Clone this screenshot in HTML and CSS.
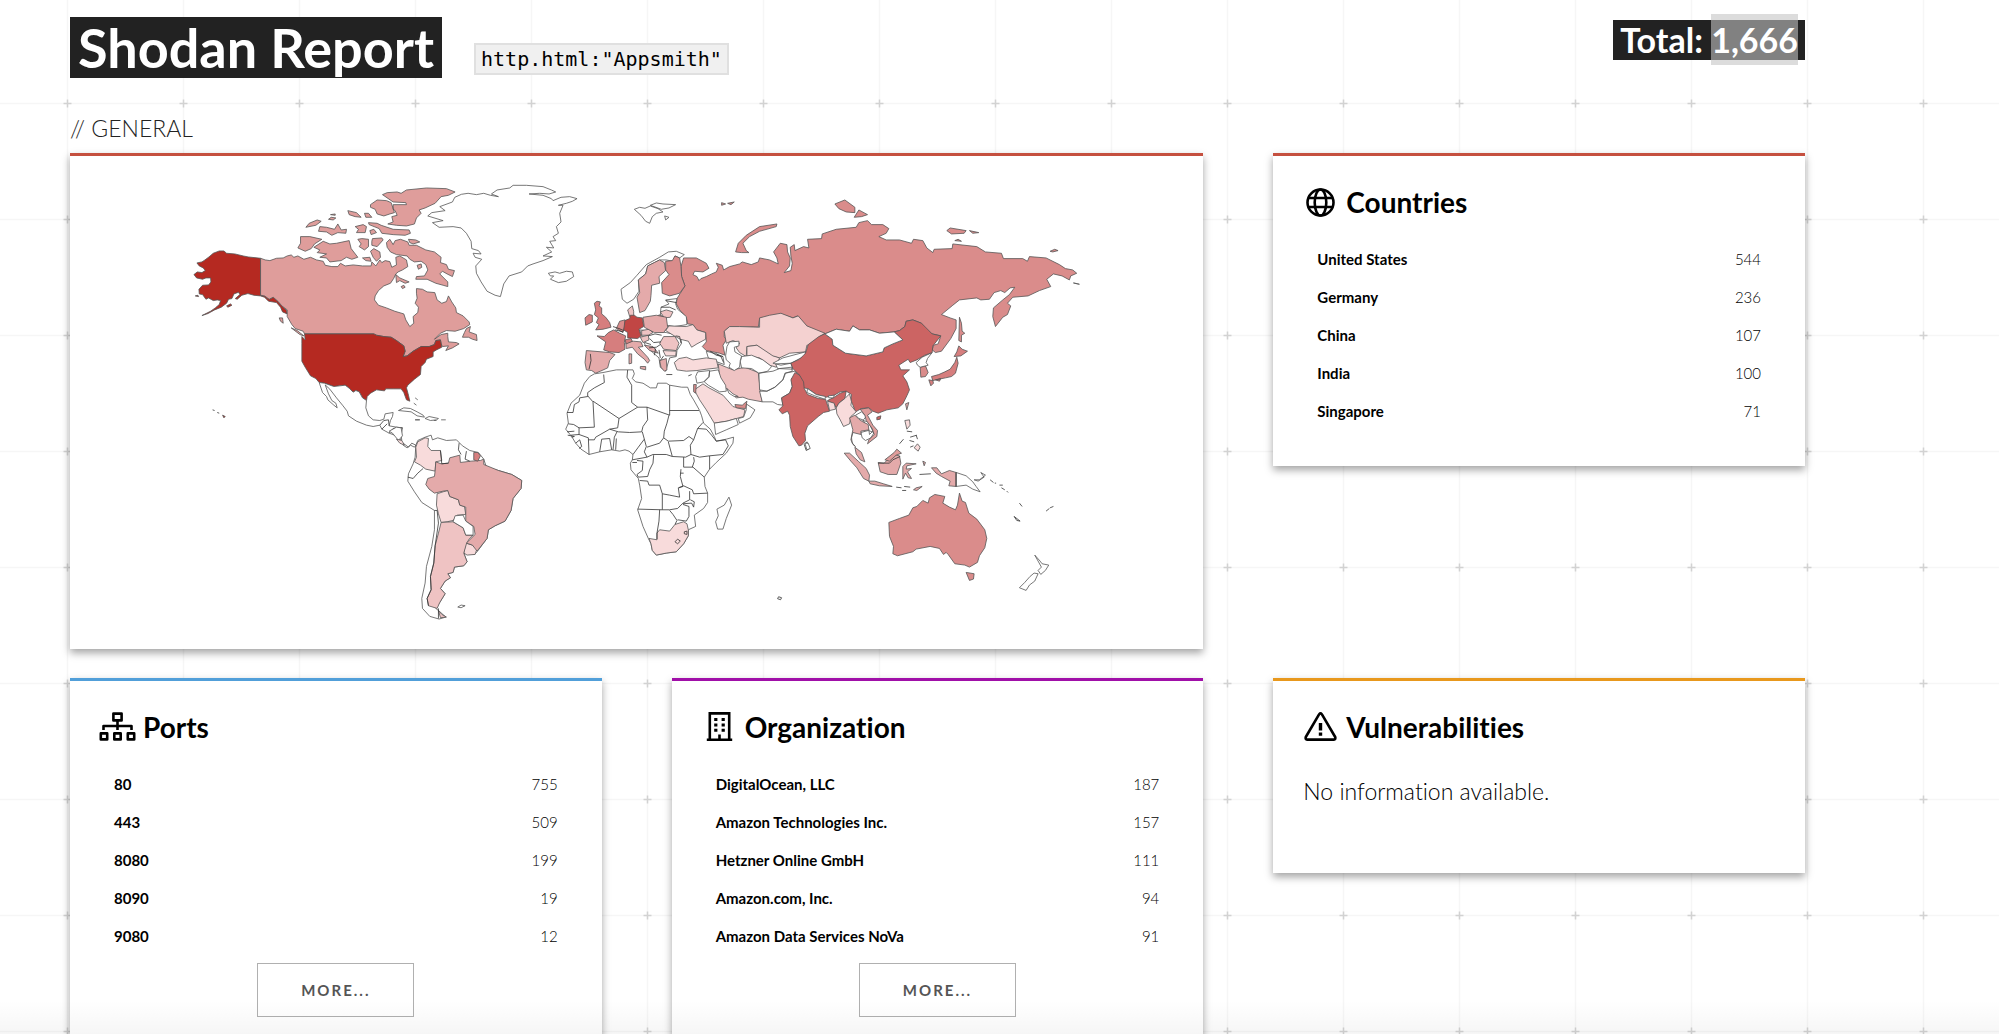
FILE: index.html
```html
<!DOCTYPE html>
<html lang="en">
<head>
<meta charset="utf-8">
<meta name="viewport" content="width=device-width, initial-scale=1">
<title>Shodan Report</title>
<link rel="stylesheet" href="styles.css">
</head>
<body>
<div class="page">
<header class="header">
  <h1 class="title">Shodan Report</h1>
  <code class="query">http.html:"Appsmith"</code>
  <p class="total">Total: <span class="total-value">1,666</span></p>
</header>
<main>
<h2 class="section-label">// GENERAL</h2>
<div class="cards">
<section class="card card-map">
<svg class="map" viewBox="70 156 1134 493" role="img" aria-label="World map of results by country">
<!-- North America -->
<g transform="translate(180 170) scale(.33333)">
<path class="l9" d="M242 265L205 261 190 258 165 252 140 250 132 243 118 243 100 250 87 261 75 270 66 276 51 279 58 288 70 294 76 302 66 308 52 306 42 314 50 324 68 328 78 324 92 324 93 336 86 345 68 346 57 358 58 372 68 374 78 388 86 384 100 392 112 390 122 392 118 404 106 414 92 424 66 437 84 431 104 420 124 412 140 400 146 388 156 386 162 372 176 367 180 374 166 386 172 388 186 376 204 371 222 376 242 378 254 382 266 394 290 398 302 412 308 426 322 432 320 422 306 408 294 394 280 382 268 388 254 378 242 376Z"/>
<path class="l5" d="M242 265L256 270 270 272 290 265 310 264 322 258 334 255 342 262 354 258 372 268 392 262 410 270 430 274 436 286 456 290 474 290 482 280 496 288 520 285 548 288 574 288 576 276 588 288 600 270 606 278 616 272 630 275 636 292 650 285 648 262 660 258 680 270 684 290 668 300 655 306 648 312 642 325 632 340 612 348 596 362 586 378 584 390 596 406 620 414 645 424 672 432 678 450 690 470 702 460 700 440 714 428 716 412 706 400 712 385 710 370 710 356 728 358 742 366 765 368 772 390 786 400 800 395 806 378 816 396 828 414 830 428 850 438 868 456 870 464 852 476 826 484 800 482 782 490 764 508 784 494 804 490 804 500 806 516 830 518 838 522 818 534 798 542 806 528 788 530 784 522 782 510 768 512 764 524 748 530 724 530 700 544 682 558 670 560 676 544 672 528 650 512 634 502 612 500 590 496 582 492 374 492 370 484 346 476 336 464 322 440 322 420 306 408 294 394 280 382 268 388 254 378 242 376Z"/>
<path class="l9" d="M374 492H582L590 496 612 500 634 502 650 512 672 528 676 544 670 560 682 558 700 544 724 530 748 530 764 524 768 512 782 510 786 532 770 540 760 546 760 560 740 568 736 578 724 590 722 614 704 628 684 646 680 654 686 676 690 694 680 690 672 668 664 657 640 657 618 657 614 663 590 660 572 670 562 680 560 692 548 684 538 666 528 662 520 667 508 655 496 646 480 648 462 650 434 640 418 638 408 626 392 618 376 592 366 574 366 520 366 500 376 510ZM140 408L152 402 156 406 144 412ZM46 378L54 376 56 380ZM128 736L136 740 132 744Z"/>
<path class="l5" d="M608 74L622 68 652 66 664 70 680 60 740 54 800 56 826 66 806 76 784 80 766 100 736 114 718 120 724 130 710 144 704 162 680 168 650 166 624 162 640 156 636 140 652 136 646 122 640 118 640 104 680 104 678 98 640 96ZM572 104L592 90 620 92 634 98 640 116 644 128 630 132 612 138 592 132 586 118 572 112ZM504 122L530 128 544 142 526 140 508 134ZM554 130L566 130 576 142 558 142ZM566 158L592 160 604 166 640 178 688 180 692 190 676 196 640 194 606 190 598 176 568 164ZM526 170L550 164 560 170 556 188 530 188 536 178ZM378 172L388 160 412 150 424 154 408 166ZM446 148L454 142 468 144 460 150ZM452 134L466 132 466 136ZM416 184L420 170 440 172 464 178 474 162 484 180 500 178 498 190 474 188 456 196 440 186ZM570 182L582 178 590 188 574 194ZM362 200L390 200 426 208 404 222 394 236 376 244 354 234 362 220ZM402 232L430 214 450 222 470 220 508 212 514 236 534 262 516 268 500 262 484 272 450 276 440 264 420 262 440 252 412 248 420 240ZM534 208L546 206 566 208 566 230 554 240 538 230 544 222ZM578 206L606 204 610 210 592 230 576 226 576 214ZM572 244L582 236 600 246 602 262 590 274 580 262ZM548 264L570 262 574 274 558 272ZM620 218L630 208 640 224 646 212 662 208 684 216 688 226 710 226 738 240 764 246 784 262 782 278 800 284 806 298 824 302 818 320 802 312 788 304 780 312 804 336 804 350 790 346 768 340 742 328 708 328 710 320 734 318 744 300 738 284 724 274 704 276 690 268 682 258 650 254 632 246 622 232ZM686 208L708 210 720 216 700 222 690 218ZM712 286L724 282 726 292 716 298ZM648 314L660 324 688 336 676 340 660 332 650 338ZM664 350L672 346 676 352 668 356ZM860 476L872 470 868 486 890 494 892 512 878 508 866 502 848 502 854 488ZM334 474L352 482 372 498 360 494ZM298 444L308 444 310 460 302 454Z"/>
<path class="l0" d="M418 638L428 668 440 680 444 690 462 706 472 714 468 700 456 692 446 672 436 645 450 658 470 684 488 706 502 724 506 738 530 754 560 766 580 770 600 766 606 778 628 790 650 798 666 812 664 796 668 774 650 772 628 768 632 752 638 740 640 728 616 732 612 748 600 752 580 750 566 738 558 714 560 692 548 684 538 666 528 662 520 667 508 655 496 646 480 648 462 650 434 640ZM656 722L672 714 692 716 712 726 730 736 734 742 712 738 694 726ZM736 746L748 740 776 746 770 750 752 752ZM706 750H720M784 750H798M706 684L714 690M702 700L710 706"/>
<path class="b" d="M600 766L612 752 626 750 628 768M606 778L622 762M628 790L640 776 668 774M98 720L104 722M112 728L118 730"/>
</g>
<!-- Greenland and North Atlantic -->
<g transform="translate(400 170) scale(.33333)">
<path class="l0" d="M165 82L185 73 205 70 230 74 252 70 272 76 296 80 275 72 292 60 330 54 340 46 380 46 430 50 455 60 468 66 448 72 420 70 388 72 430 76 455 86 460 92 484 82 510 80 532 86 518 94 500 100 476 106 490 106 480 130 484 156 470 170 476 190 460 200 468 212 450 214 462 234 440 232 456 246 430 258 458 260 430 272 400 282 384 288 366 306 328 318 312 342 302 380 286 376 262 364 244 336 230 310 228 288 246 268 226 262 220 250 244 252 236 242 216 236 214 214 200 190 184 174 160 170 118 172 98 158 130 152 84 138 96 128 136 122 120 110 158 96ZM446 310L452 318 462 318 452 328 476 338 500 334 522 320 518 306 500 304 480 310 466 306ZM704 118L720 112 736 115 752 108 775 116 790 126 770 130 758 140 750 160 738 154 724 136ZM752 106L770 99 790 102 828 104 808 114 785 118ZM795 138L808 142 798 150Z"/>
</g>
<!-- Russia -->
<g transform="translate(740 180) scale(.33333)">
<path class="l6" d="M-168 234L-130 234-100 250-92 265-110 276-135 274-140 284-128 290-122 302-116 296-100 290-84 282-70 276-64 262-70 250-52 256-48 270-30 260 0 252 8 246 35 254 56 246 60 234 90 240 116 252 112 234 102 216 122 190 142 194 144 216 152 234 150 258 134 278 154 272 158 250 154 228 152 202 164 194 166 212 192 200 208 204 204 178 246 176 248 162 290 148 350 142 358 128 384 122 396 134 430 134 448 146 440 160 418 170 440 180 480 180 516 190 522 178 550 182 562 204 580 218 584 208 638 206 640 192 712 200 738 216 786 220 792 236 850 236 864 244 870 230 920 234 960 254 978 266 1000 270 1012 280 994 288 990 300 968 288 942 282 922 298 934 320 900 332 866 348 820 352 804 370 814 378 804 404 790 412 768 440 760 410 762 384 790 360 810 344 826 322 812 324 796 338 784 332 764 338 750 358 724 360 712 354 660 360 640 376 606 404 632 414 650 420 650 446 634 476 606 514 588 518 578 510 582 496 596 492 604 468 578 462 560 450 546 430 520 420 500 424 496 440 480 452 464 456 420 460 390 450 360 450 340 438 330 454 290 448 256 462 240 460 200 438 174 408 160 414 124 402 60 416 56 442 0 440-30 440-46 454-46 470-40 480-50 496-44 526-60 520-100 512-112 500-100 486-102 458-130 450-140 434-156 432-160 412-180 390-190 372-188 356-178 340-164 318-174 290-176 260ZM-12 216L-4 190 20 166 60 140 112 132 110 140 60 154 30 170 10 190 20 212 28 218 6 218ZM286 72L316 60 346 82 346 98 320 96 298 86ZM344 112L358 90 384 104 366 110ZM622 152L632 144 680 152 674 160 636 162ZM690 152L718 158 700 160ZM646 182L656 178 666 184ZM932 214L946 208 956 212 940 216ZM1002 309L1020 313ZM660 412L666 430 668 454 676 460 666 466 666 486 658 482ZM-54 68L-42 72-54 76ZM-36 70L-16 66-26 74ZM-244 406L-226 402-220 412-240 414Z"/>
<path class="l7" d="M658 498L668 508 684 514 664 528 644 530 652 516ZM652 532L656 550 648 580 636 590 618 594 598 598 580 602 576 590 598 584 616 576 632 568 646 548ZM568 600L580 602 582 610 574 618ZM588 600L604 596 600 604Z"/>
<path class="l6" d="M542 562L558 558 566 578 558 590 544 592Z"/>
<path class="l0" d="M530 548L548 532 578 518 564 536 560 548 566 556 542 562 534 556Z"/>
</g>
<!-- South America -->
<g transform="translate(390 420) scale(.33333)">
<path class="l0" d="M78 76L84 62 106 52 124 46 128 60 144 54 170 62 200 60 218 78 240 92 266 98 282 118 290 142 326 152 366 164 396 182 394 206 370 236 364 272 346 304 316 318 296 330 292 356 262 396 254 404 222 400 232 426 222 438 194 442 190 458 174 462 182 474 166 484 152 506 166 522 150 548 138 566 148 574 168 592 148 598 120 590 98 566 96 536 106 490 110 440 126 380 134 330 134 272 96 248 74 216 54 184 56 162 70 132 76 112ZM-2 34L20 22 34 24 38 48 26 62 8 40ZM40 70L56 82 66 70 78 76 74 82 62 76 52 84 40 76ZM204 562L214 556 226 558 214 564ZM76 0H90M132 2H140"/>
<path class="l2" d="M78 82L84 66 106 54 116 56 114 80 124 92 152 92 156 122 138 126 136 154 108 148 92 136 74 126 80 112ZM20 58L36 62 44 76 30 70ZM142 222L160 216 174 212 180 230 206 240 210 256 224 260 228 284 202 286 190 302 172 306 154 308 146 282 140 256ZM228 370L248 376 262 386 256 404 232 406 222 400Z"/>
<path class="l3" d="M154 308L190 306 220 324 228 346 250 346 238 358 230 372 222 400 232 426 222 438 194 442 190 458 174 462 182 474 166 484 152 506 166 522 150 548 142 566 116 558 112 536 124 510 122 470 132 430 136 378 146 340ZM146 572L156 584 170 592 152 594Z"/>
<path class="l4" d="M136 154L138 126 154 132 176 130 180 114 210 106 212 128 244 124 272 122 282 118 282 134 326 152 366 164 396 182 394 206 370 236 364 272 346 304 316 318 296 330 292 356 262 394 248 376 230 370 256 344 252 320 228 304 228 262 210 256 206 240 180 230 174 212 160 214 134 220 118 208 108 194 114 176 134 170Z"/>
<path class="l0" d="M190 306L196 288 220 286 228 304 250 320 250 346 228 346 220 324Z"/>
<path class="l7" d="M252 98L264 98 272 108 264 124 252 120Z"/>
<path class="b" d="M152 92L156 132 176 130M208 70L206 90 214 104M230 94L226 118 240 124M54 172L70 176 84 160 100 146M134 272L142 272 146 310 136 378 132 430 122 470 124 510 112 536 116 558M146 566L146 596"/>
</g>
<!-- Europe, western and central Asia -->
<g transform="translate(560 230) scale(.33333)">
<path class="l0" d="M184 178L212 158 232 136 260 104 300 82 326 66 350 64 374 74 360 84 346 78 340 94 320 90 300 90 284 98 264 108 258 132 236 150 238 184 222 208 202 220 188 208ZM318 210L352 206 348 222 354 238 380 260 382 284 344 290 320 286 316 262 302 256 304 232 328 222ZM240 300L320 308 362 318 366 340 352 362 350 380 330 384 318 424 302 412 298 384 268 358 256 344ZM470 372L490 380 494 404 472 396 446 384 440 364Z"/>
<path class="l3" d="M204 240L218 228 222 244 222 258 210 260ZM302 246L320 240 340 246 332 262 314 264ZM246 302L268 298 280 308 266 316 246 316ZM242 322L266 316 268 330 250 338ZM312 320L346 320 358 340 350 362 312 358 300 340Z"/>
<path class="l4" d="M232 202L240 188 236 150 258 132 264 108 284 98 300 90 314 98 318 122 298 140 300 160 276 166 274 196 272 214 256 242 240 248ZM80 362L150 368 166 374 150 392 144 414 122 424 108 430 96 422 80 420 76 398ZM250 262L290 256 320 262 324 292 312 308 284 308 254 292ZM198 338L222 334 244 336 250 350 236 352 264 382 270 392 264 400 254 388 234 372 218 352 200 356ZM242 410L258 410 258 420 242 416ZM208 372L216 372 216 400 208 402ZM300 392L320 386 322 420 314 424 304 412ZM254 346L280 350 296 370 270 362Z"/>
<path class="l6" d="M306 158L328 134 318 120 318 94 338 92 346 78 360 84 364 110 366 140 376 168 360 190 330 198 308 190ZM170 296L180 274 196 270 196 286 190 308Z"/>
<path class="l7" d="M104 220L112 214 122 216 118 228 126 234 126 252 138 262 150 278 154 292 130 298 108 300 118 284 110 278 116 264 104 254 108 240ZM76 264L88 254 98 256 98 276 78 286ZM112 318L134 320 146 308 162 300 180 310 198 318 194 338 196 358 178 368 150 366 132 360 138 336ZM196 330L214 326 218 334 200 342Z"/>
<path class="l8" d="M196 272L210 266 212 256 224 256 232 262 248 264 252 290 238 298 244 318 234 326 204 324 204 308 192 300Z"/>
<path class="l2" d="M344 398L358 386 380 382 400 390 440 384 470 388 476 414 440 418 412 422 380 424 352 420ZM318 302L328 288 380 290 400 284 412 300 438 308 438 328 412 342 396 352 386 334 362 328 344 318ZM310 362L350 364 348 378 318 378ZM404 480L430 462 448 474 490 496 520 530 556 540 552 560 502 574 464 580 440 540 420 510Z"/>
<path class="l25" d="M494 304L510 290 540 290 600 292 600 264 630 256 664 250 700 264 716 258 742 288 796 310 780 320 778 342 742 346 738 366 690 370 660 384 640 380 610 360 592 346 562 350 560 380 540 368 530 354 540 340 520 332 500 340Z"/>
<path class="l2" d="M562 350L592 346 640 378 660 384 650 412 630 406 600 384 562 378Z"/>
<path class="l3" d="M476 402L500 412 520 420 556 412 596 428 600 462 602 486 608 516 566 508 550 502 530 504 510 486 494 470 480 440Z"/>
<path class="l0" d="M546 380L576 376 610 390 636 410 624 424 598 430 576 416 546 414 542 396ZM598 430L640 424 660 416 696 412 698 424 676 430 670 450 646 472 622 484 600 480ZM600 484L622 484 646 472 670 450 678 430 706 424 722 436 696 446 698 470 690 490 666 504 670 526 654 524 640 516 608 516ZM414 426L450 422 448 440 432 456 412 460 408 440ZM450 424L476 420 484 444 498 466 500 484 480 486 446 466 434 456 448 442ZM464 580L502 574 530 566 536 584 500 600 468 614ZM536 566L552 562 560 540 560 522 586 540 572 564 540 580ZM640 400L670 384 738 366 736 378 694 400 664 406ZM648 402L694 400 700 418 654 416ZM502 476L520 492 536 500 524 500 508 490Z"/>
<path class="l6" d="M526 524L548 526 562 514 558 536 530 534ZM402 464L410 464 408 490 402 486Z"/>
<path class="l0" d="M498 378L502 350 510 336 538 334 538 348 524 352 526 366 546 378 542 392 540 412 524 422 508 412 512 400 500 390Z"/>
<path class="b" d="M160 290L178 296 192 302M166 300L190 306M92 372L94 392 88 418M266 318L286 312 306 316M270 326L282 338 304 336M256 338L274 344M268 354L290 352 302 344M288 356L284 376M298 360L302 384M312 378L302 392M320 434H338M386 438L396 434M470 372L484 380 492 398M452 364L470 376 490 380M734 644L742 636 750 656 740 662ZM348 318L360 320 364 340M304 232L330 232 348 240M318 212L350 218"/>
</g>
<!-- Africa -->
<g transform="translate(560 360) scale(.33333)">
<path class="l0" d="M104 42L130 38 170 30 204 30 220 30 224 42 218 56 228 66 250 70 272 84 290 84 294 70 320 70 330 76 366 82 384 82 392 104 402 120 420 152 426 168 432 190 452 208 464 230 470 244 500 238 522 232 520 250 500 280 470 308 450 328 434 352 436 380 444 400 444 428 432 446 404 466 408 500 386 510 386 528 372 552 350 576 320 580 290 586 278 572 274 552 266 536 250 500 234 450 246 416 240 376 236 356 214 330 212 310 218 300 220 284 208 274 196 270 180 274 156 270 120 276 88 284 64 268 48 250 36 230 18 208 26 190 22 160 34 130 60 106 74 70 90 50ZM508 412L516 436 500 476 490 508 474 508 468 486 476 468 472 448 494 436Z"/>
<path class="l2" d="M268 536L292 540 292 520 300 510 330 514 346 494 372 486 382 492 386 510 386 528 372 552 350 576 320 580 290 586 278 572 274 552Z"/>
<path class="b" d="M132 44L134 68 104 84 84 98 84 110 60 114 58 126 44 134 40 158H22M84 108L100 126 104 202 58 204M100 124L178 176 234 142 216 128 216 76 202 52 204 30M330 76V166L262 142 234 142M330 152H418M262 142L264 180 250 200 246 216 210 218 176 216 150 208 108 232 104 240 86 240M178 176L174 204 150 208M328 166L322 190 314 214 312 234 326 244 372 242 388 230 402 240 414 206 430 188M26 192L42 194 58 204 58 224 34 226M22 216L44 214M24 226L44 230 36 232M48 250L60 240 66 260 58 266M58 224L86 234 88 284M120 276L126 238 150 236 156 270M160 270L164 232 172 216M168 270L170 236M220 284L236 262 254 238 248 216M254 238L260 260 254 276 262 292 218 300M262 262L300 250 312 234M262 292L280 284 320 284 338 290 326 246M338 290L378 292 394 284 392 256 402 240M394 284L420 292 450 288 490 284 506 258 498 240 470 244M414 206L440 208 456 226 470 244M450 288L450 328M372 292L372 322 400 322 434 352M402 292L404 304 398 322M364 328L362 350 370 380 358 384M362 340H372M232 302L250 304 248 332 232 344 236 352 264 350 270 330 280 310 282 286M218 308H232M240 362L264 364 268 376 300 376 308 402 308 450 234 448M308 402L330 406 360 412 356 384 372 378 398 390 402 402 444 400M308 450L330 450 354 446 370 430 390 420 390 394M392 420L404 426 402 442 396 430 370 432M330 452L340 464 352 482 346 494M370 434L388 440 388 470 380 484 354 480M300 450L298 484 292 520V538M346 546L354 538 362 544 354 552ZM374 516L382 514 382 524 374 522Z"/>
</g>
<!-- Eastern Asia and Oceania -->
<g transform="translate(800 320) scale(.33333)">
<path class="l8c" d="M76 42L58 50 26 74 18 100 0 118-26 130-20 146-2 164 8 184 10 204 24 206 50 224 80 232 104 226 122 216 140 214 156 224 154 240 168 276 186 266 208 264 220 274 236 280 262 270 296 264 310 252 322 228 330 210 322 186 310 168 330 150 304 150 298 136 326 118 332 128 352 120 376 106 398 98 400 78 424 48 398 42 366 10 340 0 320 4 316 20 300 32 284 36 310 60 280 72 254 84 250 96 200 108 138 100 100 76 98 58ZM232 292L244 288 242 298 232 300Z"/>
<path class="l0" d="M76 42L110 28 150 34 160 18 180 30 210 30 240 40 284 36 310 60 280 72 254 84 250 96 200 108 138 100 100 76 98 58Z"/>
<path class="l8c" d="M-14 158L0 166 12 186 14 206 24 224 56 236 78 238 86 262 90 274 72 278 56 290 24 318 16 340 18 362 6 376-2 378-20 350-28 320-30 286-36 274-52 282-62 270-50 258-54 234-30 220-22 200-26 180ZM84 242L104 232 122 220 140 214 136 236 118 250 110 264 104 252 90 246Z"/>
<path class="l0" d="M24 206L50 224 78 230 76 238 46 228 22 218ZM86 228L104 226 102 234 88 234ZM16 370L26 370 32 386 22 390ZM168 286L186 276 200 290 190 302 206 306 220 334 210 344 208 330 190 300 178 296ZM184 338L206 332 224 338 214 354 198 362 188 354Z"/>
<path class="l2" d="M84 244L104 250 108 268 90 272ZM110 264L118 250 136 236 150 222 156 246 154 256 170 276 154 290 150 312 132 320 122 300 112 282ZM316 302L330 300 332 316 322 328ZM344 384L354 372 362 382 356 394Z"/>
<path class="l4" d="M150 294L166 286 178 298 190 306 206 314 208 330 184 334 184 344 160 338 156 354 158 370 168 380 162 376 154 360 160 330ZM166 382L186 398 196 426 182 420 170 402ZM134 400L150 400 176 424 200 446 210 466 208 484 192 476 172 444 154 424ZM208 484L226 484 252 492 278 500 240 498 212 492ZM236 428L254 430 280 404 300 408 304 430 292 464 266 464 242 456ZM310 440L320 430 350 432 322 438 320 448 336 446 324 456 336 476 326 474 318 460 310 478ZM396 444L412 444 426 462 450 452 470 458 470 500 448 498 452 484 426 470 410 460ZM342 510L350 504 368 500 352 512ZM370 424L378 428 374 438ZM318 252L328 248 322 270Z"/>
<path class="l5" d="M182 268L208 264 218 276 204 286 220 316 234 332 232 350 204 372 208 360 224 344 218 326 200 302 196 286ZM256 420L284 398 292 388 306 400 290 406 270 424Z"/>
<path class="l6" d="M268 608L300 596 328 586 340 564 352 560 370 542 386 550 390 534 406 524 436 530 430 550 450 562 468 570 474 556 480 520 488 544 498 548 508 580 532 598 556 630 562 656 556 684 540 708 534 728 510 742 496 736 466 732 446 704 440 698 432 704 420 686 392 680 350 688 340 696 294 708 280 702 282 680 270 650ZM500 758L524 762 522 778 510 782Z"/>
<path class="l0" d="M470 458L500 468 520 486 530 500 542 516 520 508 500 496 470 500ZM524 480L540 480 558 466 544 458 554 472 536 484ZM706 706L722 724 728 732 748 736 738 752 724 764 716 752 726 742ZM704 760L716 762 706 784 690 796 680 812 660 804 676 788 692 770Z"/>
<path class="b" d="M236 430L270 430 280 420 302 410M470 458V500M300 372L312 358M322 334L338 336M332 352L352 346M330 362L344 366M332 382L342 378M350 346L354 358M290 502L306 504M314 500L332 502M360 464L394 462M308 512L320 512M572 480L582 488M586 490L590 490M600 496L610 496M606 504L616 510M622 514L626 518M660 550L668 560M644 590L662 604 652 602ZM740 574L750 566M752 564L762 560"/>
</g>
<path class="b" d="M779 597L782 598 781 600 778 599Z"/>
</svg>
</section>

<section class="card card-red">
  <h2 class="card-title"><svg class="icon" viewBox="0 0 37 29" fill="none" stroke="currentColor" stroke-width="2.6" aria-hidden="true"><circle cx="18.5" cy="14.5" r="13"/><ellipse cx="18.5" cy="14.5" rx="5.8" ry="13"/><path d="M6.5 10H30.5M6.5 19H30.5"/></svg>Countries</h2>
  <table class="facts">
    <tr><th scope="row">United States</th><td>544</td></tr>
    <tr><th scope="row">Germany</th><td>236</td></tr>
    <tr><th scope="row">China</th><td>107</td></tr>
    <tr><th scope="row">India</th><td>100</td></tr>
    <tr><th scope="row">Singapore</th><td>71</td></tr>
  </table>
</section>

<section class="card card-blue">
  <h2 class="card-title"><svg class="icon" viewBox="0 0 37 29" fill="none" stroke="currentColor" stroke-width="2.6" stroke-linejoin="round" aria-hidden="true"><path d="M14.4 1.6H22.6V8.4H14.4ZM1.8 21.4H8.2V27.4H1.8ZM15.3 21.4H21.7V27.4H15.3ZM28.8 21.4H35.2V27.4H28.8ZM18.5 8.4V18M4.5 18V14H32.5V18"/></svg>Ports</h2>
  <table class="facts">
    <tr><th scope="row">80</th><td>755</td></tr>
    <tr><th scope="row">443</th><td>509</td></tr>
    <tr><th scope="row">8080</th><td>199</td></tr>
    <tr><th scope="row">8090</th><td>19</td></tr>
    <tr><th scope="row">9080</th><td>12</td></tr>
  </table>
  <button class="more" type="button">MORE...</button>
</section>

<section class="card card-purple">
  <h2 class="card-title"><svg class="icon" viewBox="0 0 37 29" aria-hidden="true"><path fill="none" stroke="currentColor" stroke-width="2.6" d="M8.8 27V1.4H28.2V27M5.8 27.7H31.2M18.5 27V22.5"/><path fill="currentColor" d="M13.2 6H16.4V9H13.2ZM20.6 6H23.8V9H20.6ZM13.2 11.4H16.4V14.4H13.2ZM20.6 11.4H23.8V14.4H20.6ZM13.2 16.8H16.4V19.8H13.2ZM20.6 16.8H23.8V19.8H20.6Z"/></svg>Organization</h2>
  <table class="facts">
    <tr><th scope="row">DigitalOcean, LLC</th><td>187</td></tr>
    <tr><th scope="row">Amazon Technologies Inc.</th><td>157</td></tr>
    <tr><th scope="row">Hetzner Online GmbH</th><td>111</td></tr>
    <tr><th scope="row">Amazon.com, Inc.</th><td>94</td></tr>
    <tr><th scope="row">Amazon Data Services NoVa</th><td>91</td></tr>
  </table>
  <button class="more" type="button">MORE...</button>
</section>

<section class="card card-orange">
  <h2 class="card-title"><svg class="icon" viewBox="0 0 37 29" fill="none" stroke="currentColor" stroke-width="2.6" stroke-linejoin="round" aria-hidden="true"><path d="M17.2 2.2Q18.5.6 19.8 2.2L33.2 25Q34 27.4 31.8 27.6H5.2Q3 27.4 3.8 25Z"/><path stroke-width="3.4" d="M18.5 11V18.6M18.5 20.4V23.8"/></svg>Vulnerabilities</h2>
  <p class="empty">No information available.</p>
</section>
</div>
</main>
</div>
</body>
</html>
```
FILE: styles.css
```css
* {
  box-sizing: border-box;
}

body {
  margin: 0;
  color: #000;
  font-family: Lato, "Open Sans", sans-serif;
  font-variant-ligatures: none;
  background: #fff;
}

h1, h2, p {
  margin: 0;
}

/* Fills the window; the report is cut at the fold under a soft grey fade */
.page {
  position: relative;
  height: 100vh;
  overflow: hidden;
  padding: 17px 194px 0 70px;
  background-color: #fff;
  background-image: url("data:image/svg+xml,%3Csvg xmlns='http://www.w3.org/2000/svg' width='116' height='116'%3E%3Cpath d='M0 103.5H116M67.5 0V116' stroke='%23f6f6f6' stroke-width='1.5'/%3E%3Cpath d='M63.5 103.5H71.5M67.5 99.5V107.5' stroke='%23d2d2d2' stroke-width='1.5'/%3E%3C/svg%3E");
}

.page::after {
  content: "";
  position: absolute;
  left: 0;
  right: 0;
  bottom: 0;
  height: 34px;
  background: linear-gradient(rgba(0, 0, 0, 0), rgba(0, 0, 0, .035));
  pointer-events: none;
}

.header {
  display: flex;
  align-items: flex-start;
}

.title {
  padding: 0 8px;
  font-size: 54px;
  font-weight: 700;
  line-height: 61px;
  color: #fff;
  background: #222;
}

.query {
  margin: 26px 0 0 32px;
  padding: 0 5px;
  border: 2px solid #e0e0e0;
  font: 20px/28px "DejaVu Sans Mono", monospace;
  background: #f0f0f0;
}

.total {
  margin: 3px 0 0 auto;
  padding: 0 7px;
  font-size: 34px;
  font-weight: 700;
  line-height: 40px;
  color: #fff;
  background: #222;
}

.total-value {
  padding: 5px 0;
  background: rgba(196, 196, 196, .59);
}

.section-label {
  padding: 36px 0 11px;
  font-size: 23px;
  font-weight: 300;
  line-height: 28px;
  color: #222;
}

.cards {
  display: grid;
  grid-template-columns: repeat(3, 1fr);
  align-items: start;
  gap: 29px 70px;
}

.card {
  padding-bottom: 36px;
  border-top: 3px solid #c5503f;
  background: #fff;
  box-shadow: 0 4px 8px rgba(0, 0, 0, .36);
}

.card-map {
  grid-column: span 2;
  padding: 0;
}

.card-blue {
  border-top-color: #519fd9;
}

.card-purple {
  border-top-color: #a00fa8;
}

.card-orange {
  border-top-color: #e8981d;
}

.card-title {
  display: flex;
  align-items: center;
  gap: 7px;
  height: 84px;
  padding: 8px 29px 0;
  font-size: 28px;
  font-weight: 700;
}

.icon {
  flex: none;
  width: 37px;
  height: 29px;
}

.facts {
  width: calc(100% - 88px);
  margin: 0 44px;
  border-collapse: collapse;
}

.facts th,
.facts td {
  height: 38px;
  padding: 0;
}

.facts th {
  font-size: 15px;
  font-weight: 700;
  text-align: left;
}

.facts td {
  font-size: 15px;
  font-weight: 300;
  text-align: right;
}

.more {
  display: block;
  width: 157px;
  height: 54px;
  margin: 8px auto 0;
  padding: 0;
  border: 1px solid #b0b0b0;
  font: 700 15px/20px Lato, sans-serif;
  letter-spacing: 2px;
  color: #555;
  background: #fff;
}

.empty {
  padding: 10px 30px 30px;
  font-size: 23px;
  font-weight: 300;
  line-height: 32px;
}

.map {
  display: block;
  width: 100%;
  height: auto;
}

.map path {
  stroke: #555;
  stroke-width: .8px;
  stroke-linejoin: round;
  vector-effect: non-scaling-stroke;
}

/* Map shading, from no results to the most results */
.map .b { fill: none; stroke: #333; }
.map .l0 { fill: #fff; }
.map .l2 { fill: #f8dbdb; }
.map .l25 { fill: #f4d1d0; }
.map .l3 { fill: #efc3c3; }
.map .l4 { fill: #e4aaaa; }
.map .l5 { fill: #df9d9b; }
.map .l6 { fill: #da8c8b; }
.map .l7 { fill: #d67e7e; }
.map .l8 { fill: #c14644; }
.map .l8c { fill: #cc6463; }
.map .l9 { fill: #b52921; }
```
